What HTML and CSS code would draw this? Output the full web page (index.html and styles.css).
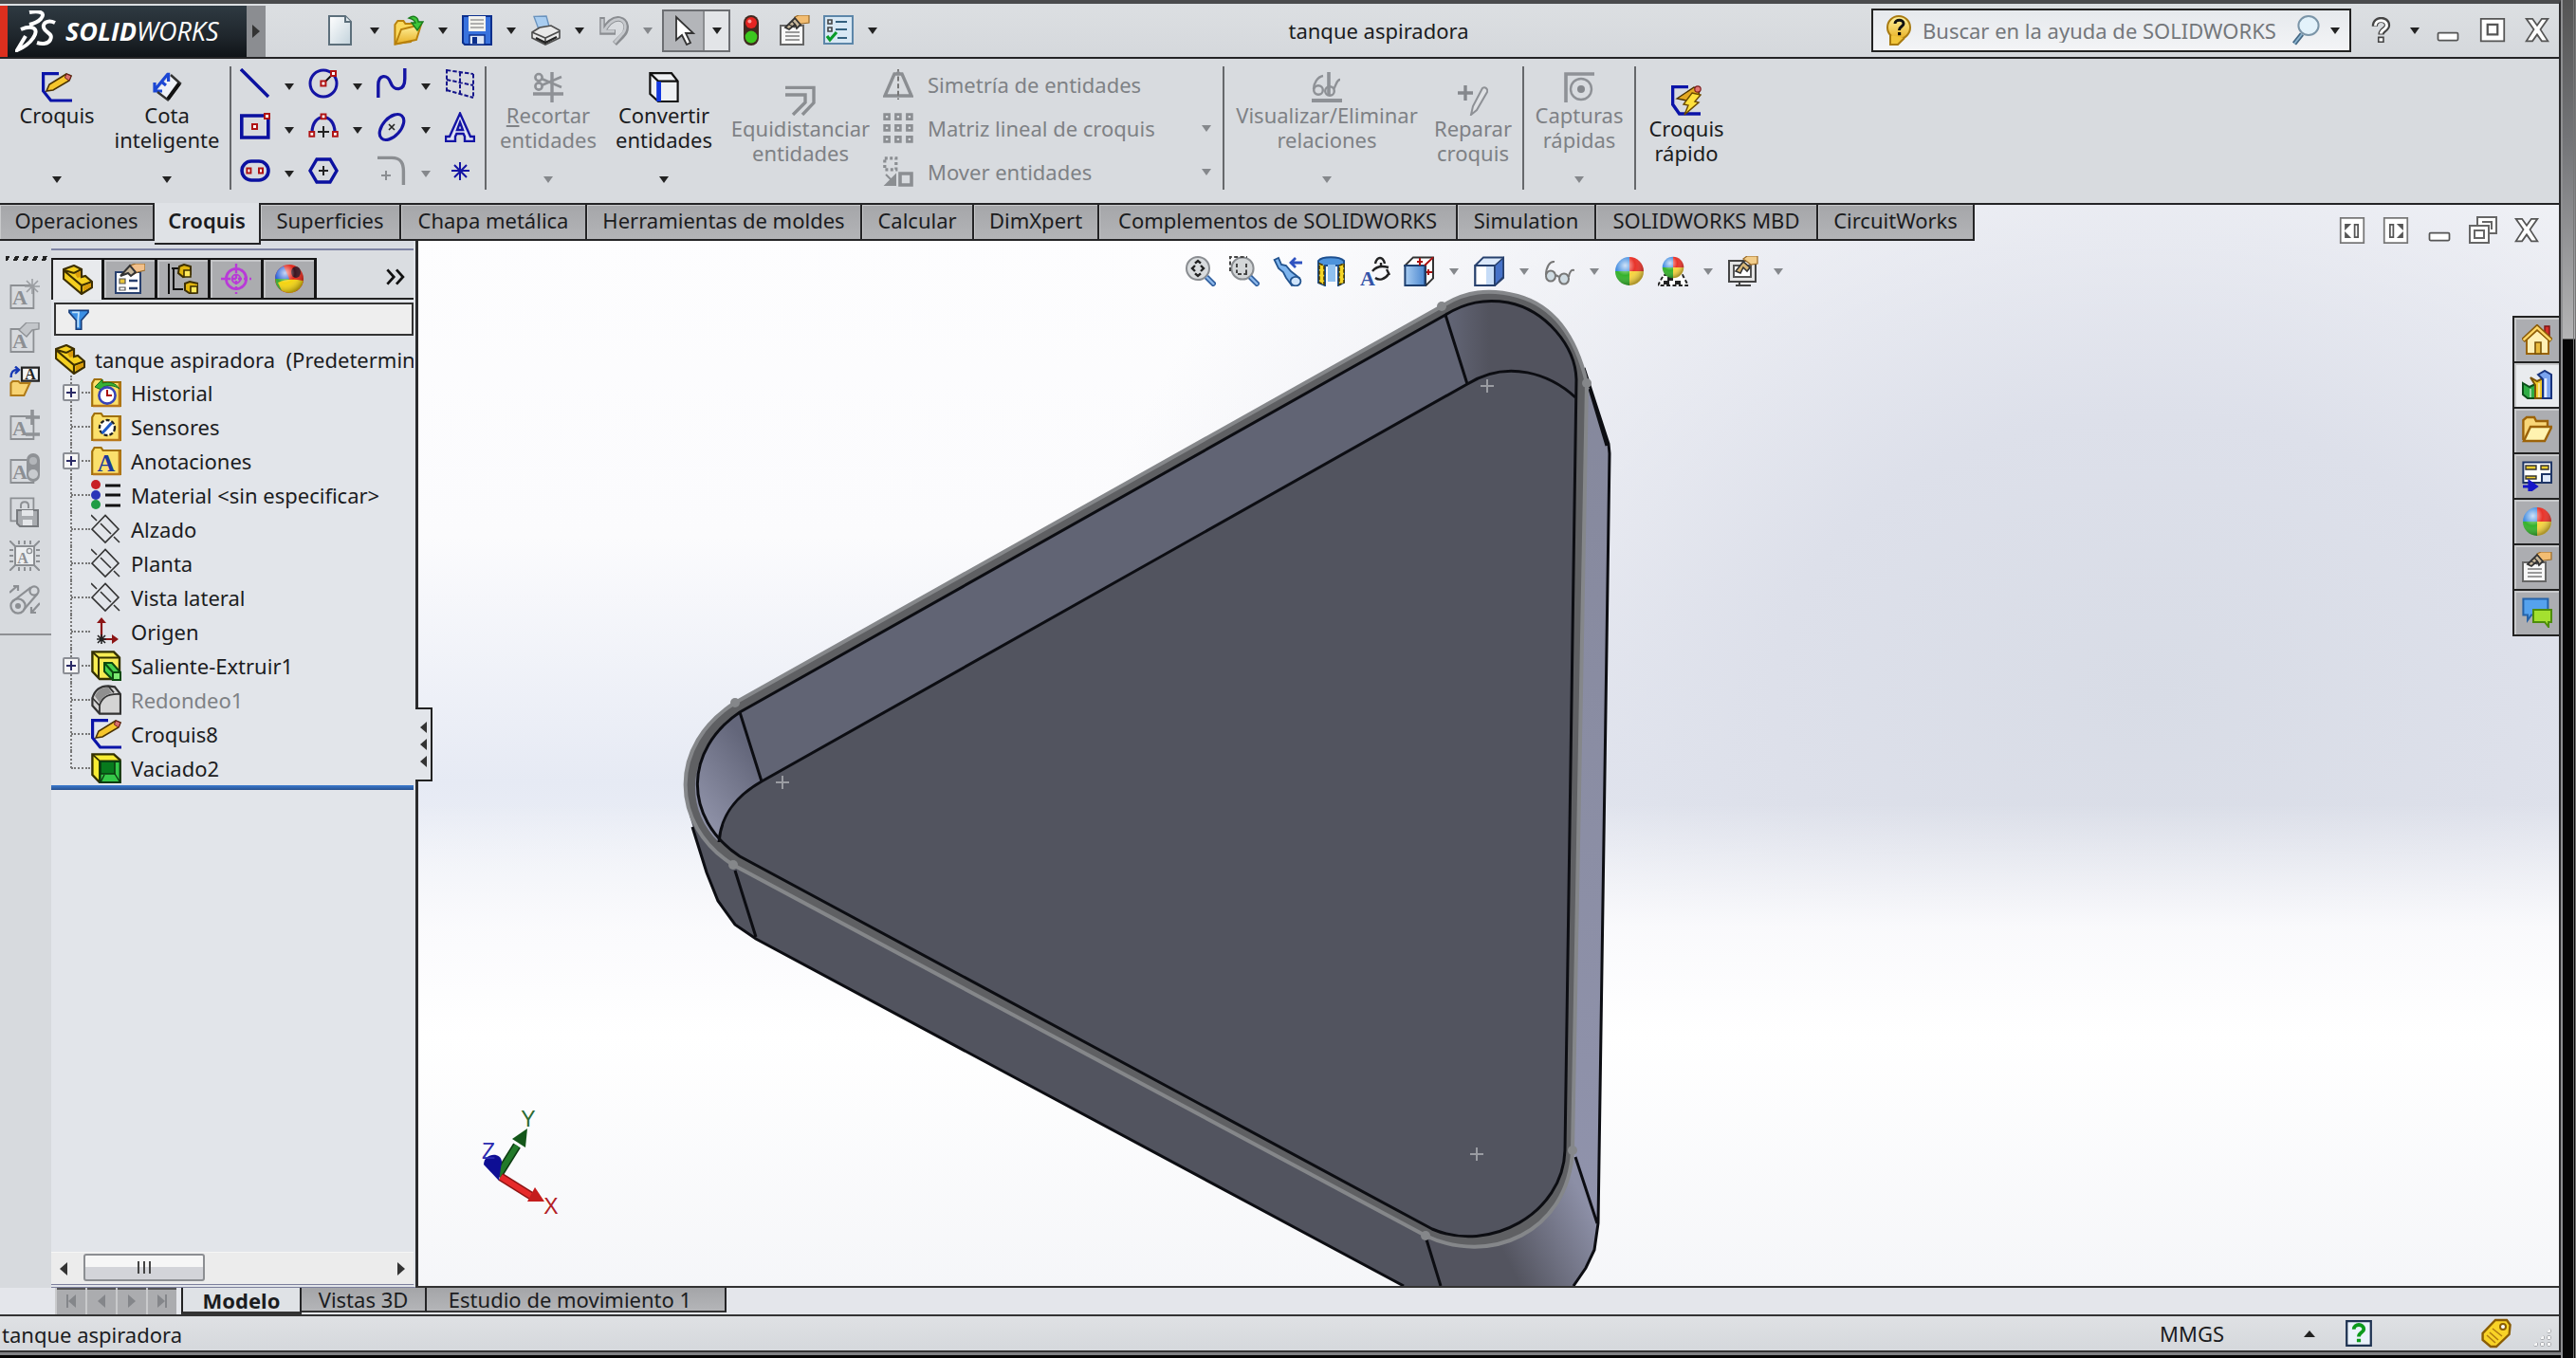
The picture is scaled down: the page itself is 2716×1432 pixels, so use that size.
FILE: index.html
```
<!DOCTYPE html>
<html lang="es">
<head>
<meta charset="utf-8">
<title>SOLIDWORKS - tanque aspiradora</title>
<link rel="stylesheet" href="styles.css">
</head>
<body>
<svg class="sprite" aria-hidden="true">
<defs>
<linearGradient id="gPaper" x1="0" y1="0" x2="1" y2="1"><stop offset="0" stop-color="#fff"/><stop offset="1" stop-color="#c3d3dc"/></linearGradient>
<linearGradient id="gGold" x1="0" y1="0" x2="0" y2="1"><stop offset="0" stop-color="#fff3a0"/><stop offset="1" stop-color="#e8b024"/></linearGradient>
<linearGradient id="gBlue" x1="0" y1="0" x2="1" y2="0"><stop offset="0" stop-color="#a9cdf2"/><stop offset="1" stop-color="#4a86cf"/></linearGradient>
<radialGradient id="gShine" cx=".35" cy=".3" r=".7"><stop offset="0" stop-color="#fff" stop-opacity=".75"/><stop offset=".5" stop-color="#fff" stop-opacity="0"/><stop offset="1" stop-color="#000" stop-opacity=".3"/></radialGradient>
</defs>
</svg>
<svg class="icons" aria-hidden="true">
<symbol id="new" viewBox="0 0 16 16"><path d="M2 .5h8.500l3 3v12H2z" fill="url(#gPaper)" stroke="#5c6f7b"/><path d="M10.500 .5v3h3" fill="#dfe8ed" stroke="#5c6f7b"/></symbol>
<symbol id="open" viewBox="0 0 16 16"><path d="M.7 15V5l1.500-2h3l1 1.500h6V7L9 14z" fill="#fbd95c" stroke="#b8810c"/><path d="M1 15.300L4 7.500 14.500 5 12 13z" fill="url(#gGold)" stroke="#b8810c"/><path d="M8 1.500c3-2 5 0 5 2h2.500L12.500 8 9.500 4h2C11 2.500 10 2 8 1.500z" fill="#3ec63a" stroke="#1a7c1c" stroke-width=".7"/></symbol>
<symbol id="save" viewBox="0 0 16 16"><path d="M.5.5h15v15H1.500l-1-1z" fill="#3872dd" stroke="#0b2f8c"/><path d="M3.500.5h9v8h-9z" fill="#f3f3ee"/><path d="M4.500 2.500h7M4.500 4.500h7M4.500 6.500h7" stroke="#999" stroke-width=".8"/><path d="M4 10.500h8v5H4z" fill="#dbe5f5" stroke="#0b2f8c" stroke-width=".7"/><path d="M5.500 11.500h2.500v3.500H5.500z" fill="#0b2f8c"/></symbol>
<symbol id="print" viewBox="0 0 16 16"><path d="M2 .7L8.500.5 10 6 4.500 7.500z" fill="#a9cdf0" stroke="#6a93be" stroke-width=".7"/><path d="M1 9l4-2.500 6-1L15.500 8v4L8 15.500 1 12z" fill="#e9e9e9" stroke="#4c4c4c" stroke-width=".8"/><path d="M1 9l7 3 7.500-3.500M8 12v3.500" fill="none" stroke="#4c4c4c" stroke-width=".8"/><path d="M3 12l5 2.500 6-3" fill="none" stroke="#222" stroke-width="1.200"/></symbol>
<symbol id="undo" viewBox="0 0 16 16"><path d="M2 1v8h7M2.500 8.500C5 4 8 1.500 11 2c4.500.8 4.500 6 1.500 9l-4 4" fill="none" stroke="#8a8d91" stroke-width="2.800"/><path d="M2 2v6.500h6.500M3 8C5.500 4 8 1.700 11 2.200c4 1 4 5.500 1 8.300l-3.500 4" fill="none" stroke="#c6c9cd" stroke-width="1.400"/></symbol>
<symbol id="cursor" viewBox="0 0 16 16"><path d="M4 1v12l3-2.500 2.500 5 2-1L9 9.500h4z" fill="#fff" stroke="#333" stroke-width=".9"/></symbol>
<symbol id="traffic" viewBox="0 0 16 16"><rect x="4" y="0" width="8" height="16" rx="4" fill="#402a20"/><circle cx="8" cy="4" r="3" fill="#e52521"/><circle cx="8" cy="11.500" r="3.200" fill="#3cc81e"/><circle cx="7.200" cy="3.200" r="1" fill="#f99"/></symbol>
<symbol id="props" viewBox="0 0 16 16"><path d="M.5 5.500h12v10H.5z" fill="#f7f7f7" stroke="#666"/><path d="M3 9h7.500M3 11h7.500M3 13h7.500" stroke="#999"/><path d="M8 1l2-1h5.500v4l-4 .5-2 1z" fill="#f2bd72" stroke="#9a6a27" stroke-width=".6"/><path d="M3 6.500L8 1.500l3 3.500-2 2-1-2-3 2.500z" fill="#c8b89c" stroke="#333" stroke-width=".9"/><path d="M5 5l3 1.500M6.500 3l2.500 3" stroke="#333" stroke-width=".6"/></symbol>
<symbol id="options" viewBox="0 0 16 16"><path d="M.5.500h15v14.500H.5z" fill="#d8e8f4" stroke="#5c86a9"/><path d="M2.500 2.500h2v2h-2zM2.500 6.500h2v2h-2z" fill="none" stroke="#444" stroke-width=".8"/><path d="M6.500 3.500h6M6.500 7.500h6M7.500 12h5" stroke="#33607e"/><path d="M2 11l1.500 2L7 9" fill="none" stroke="#0a9b29" stroke-width="1.600"/></symbol>
<symbol id="bulb" viewBox="0 0 16 16"><circle cx="8.500" cy="6.500" r="6" fill="url(#gGold)" stroke="#a87a11"/><path d="M4 10.500v5h4l3.500-3.500" fill="#f1c53a" stroke="#a87a11"/><path d="M6.500 4.500c0-2.500 4.500-2.500 4.500 0 0 1.600-2.300 1.500-2.300 3.500" fill="none" stroke="#111" stroke-width="1.500"/><path d="M8 9h1.600v1.600H8z"/></symbol>
<symbol id="lens" viewBox="0 0 16 16"><ellipse cx="9.500" cy="5.500" rx="5.300" ry="5" fill="#e3f2fb" stroke="#7b95a8"/><path d="M6 10l-4 5" stroke="#426683" stroke-width="2.600"/><path d="M6 10l-4 5" stroke="#8bb4d0" stroke-width="1"/></symbol>
<symbol id="q" viewBox="0 0 16 16"><path d="M4.500 5.500c0-5 7.500-5 7.500-.5 0 2.500-3.700 2.700-3.700 5.500" fill="none" stroke="#444" stroke-width="3.600"/><path d="M4.800 5.300c0-4.200 6.900-4.200 6.900-.3 0 2.500-3.500 2.500-3.500 5" fill="none" stroke="#fff" stroke-width="1.700"/><path d="M6.700 12.200h3v2.800h-3z" fill="#fff" stroke="#444" stroke-width=".9"/></symbol>
<symbol id="min" viewBox="0 0 16 16"><rect x="2" y="9.500" width="12" height="4.500" rx=".7" fill="#fff" stroke="#555"/></symbol>
<symbol id="max" viewBox="0 0 16 16"><path d="M1 1h14v13.500H1z" fill="#fff" stroke="#555"/><path d="M5 4.500h6v6H5z" fill="#fff" stroke="#555" stroke-width="1.300"/></symbol>
<symbol id="x" viewBox="0 0 16 16"><path d="M1.500 1h3.700L8 5l2.800-4h3.700L10 7.500l4.500 7h-3.700L8 10.500l-2.800 4H1.500l4.500-7z" fill="#fff" stroke="#555"/></symbol>
<symbol id="restore" viewBox="0 0 16 16"><path d="M5 1h10v8.500H5z" fill="#fff" stroke="#666"/><path d="M7.500 3.500h5v4" fill="none" stroke="#666"/><path d="M1 5.500h10v9H1z" fill="#fff" stroke="#666"/><path d="M3.500 8h5v4h-5z" fill="none" stroke="#666"/></symbol>
<symbol id="dock" viewBox="0 0 16 16"><path d="M1 .5h14v15H1z" fill="#fff" stroke="#777"/><path d="M9.500 4.500h2v7.500h-2z" fill="#fff" stroke="#555"/><path d="M3.500 4h4l-4 4zM3.500 12.500h4l-4-4z" fill="#555"/></symbol>
<symbol id="sketch" viewBox="0 0 16 16"><path d="M9 .8H.8v9.200l4 5H16" fill="none" stroke="#0b14a8" stroke-width="1.600"/><path d="M2.500 10L4 6.500 13 1l2.500 1-1 2.500-8.500 5z" fill="#f6c62c" stroke="#4a3200" stroke-width=".8"/><path d="M13 1l2.500 1-1 2.500-2.300-1.500z" fill="#d9706c" stroke="#6b1d1d" stroke-width=".5"/></symbol>
<symbol id="dim" viewBox="0 0 16 16"><path d="M3 9.500l5.500 4.500 6-8L9.500 2z" fill="#eef1f7"/><path d="M1.500 9.500L8.500 1M1.500 5.500v4.500h4M8 1.200h.8V5M5 5l2.500 2" fill="none" stroke="#1b46d4" stroke-width="1.600"/><path d="M3 10.500l5.500 4.200L15 6 10 1.500" fill="none" stroke="#333" stroke-width="1.200"/><path d="M8.500 14.200L14.500 6" stroke="#111" stroke-width="2"/></symbol>
<symbol id="line" viewBox="0 0 16 16"><path d="M.5.500L15 15" stroke="#0b11a0" stroke-width="1.700"/></symbol>
<symbol id="circ" viewBox="0 0 16 16"><circle cx="8" cy="8" r="7" fill="none" stroke="#1414a4" stroke-width="1.500"/><path d="M8 8l4.500-4.500" stroke="#111"/><path d="M6.700 6.700h2.500v2.500H6.700zM12 1.500h2.500V4H12z" fill="#fff" stroke="#b01414"/></symbol>
<symbol id="spline" viewBox="0 0 16 16"><path d="M.9 15.500V9c0-6 5-6 6.500-1.500s7.500 5 7.500-2V0" fill="none" stroke="#1414a4" stroke-width="1.700"/></symbol>
<symbol id="planes" viewBox="0 0 16 16"><path d="M1 .5v12.500M1 1l14 2M15 3v12.500M1 6l14 3M1 11.500l14 4M8 2v11.500" fill="none" stroke="#15158a" stroke-dasharray="2.200 1"/></symbol>
<symbol id="rect" viewBox="0 0 16 16"><path d="M.9 2h14v11.500H.9z" fill="none" stroke="#0b11a0" stroke-width="1.800"/><path d="M6.500 6.500h2.500V9H6.500zM13 1h2.500v2.500H13z" fill="#fff" stroke="#b01414"/></symbol>
<symbol id="arc" viewBox="0 0 16 16"><path d="M2 11c0-11 12-11 12 0" fill="none" stroke="#1414a4" stroke-width="1.600"/><path d="M8 7.500v6M5 10.500h6" stroke="#222"/><path d="M6.800 1.200h2.400v2.400H6.800zM.7 10.500h2.400v2.400H.7zM13 10.500h2.400v2.400H13z" fill="#fff" stroke="#b01414"/></symbol>
<symbol id="ellipse" viewBox="0 0 16 16"><ellipse cx="8" cy="8" rx="8" ry="4.700" transform="rotate(-48 8 8)" fill="none" stroke="#1414a4" stroke-width="1.600"/><path d="M6.500 6.500l3 3M9.500 6.500l-3 3" stroke="#222" stroke-width=".8"/></symbol>
<symbol id="glyph" viewBox="0 0 16 16"><path d="M8 .8L13.500 13h2v2.500h-5V13L9.800 11.500H6.200L5.500 13v2.500h-5V13h2zM8 5.500L6.500 9.500h3z" fill="#dfe2f3" stroke="#1414a4" stroke-width="1.200"/></symbol>
<symbol id="slot" viewBox="0 0 16 16"><rect x="1" y="3" width="14" height="10" rx="5" fill="none" stroke="#0b11a0" stroke-width="1.800"/><path d="M3.700 6.800h2v2.400h-2zM10 6.800h2v2.400h-2z" fill="#fff" stroke="#b01414"/></symbol>
<symbol id="poly" viewBox="0 0 16 16"><path d="M4.500 2h7l3.500 6-3.500 6h-7L1 8z" fill="none" stroke="#0b11a0" stroke-width="1.700"/><path d="M8 5.500v5M5.500 8h5" stroke="#222"/></symbol>
<symbol id="fillet" viewBox="0 0 16 16"><path d="M.5 1.200H8c5 0 6.200 3 6.200 7v7.300" fill="none" stroke="#8b8e92" stroke-width="1.700"/><path d="M5 8v5M2.500 10.500h5" stroke="#8b8e92"/></symbol>
<symbol id="star" viewBox="0 0 16 16"><path d="M8 3.500v9.500M3.500 8h9.500M5 5l6.500 6.500M11.500 5L5 11.500" stroke="#1414a4" stroke-width="1"/></symbol>
<symbol id="trim" viewBox="0 0 16 16"><g fill="none" stroke="#8e9196" stroke-width="1.300"><path d="M10 0v16M0 11.500h16" stroke-width="1.700"/><circle cx="3" cy="2.800" r="1.800"/><circle cx="3" cy="7.500" r="1.800"/><path d="M4.500 3.500L15 8M4.500 7L15 2.500"/></g></symbol>
<symbol id="convert" viewBox="0 0 16 16"><path d="M1 1h11l3 4v10.500H5L1 12z" fill="#eef0f3"/><path d="M1 .6h11l3.300 4.200v10.700H5L.7 11.500V.6L5 4.800h10M5 4.800v10.700" fill="none" stroke="#111" stroke-width="1.100"/><path d="M5.300 5v10.500" stroke="#1238e0" stroke-width="2.400"/></symbol>
<symbol id="offset" viewBox="0 0 16 16"><path d="M0 1.200h15v8L9 15.500M0 5h10.500v4L4 15.500" fill="none" stroke="#8b8e92" stroke-width="1.700"/></symbol>
<symbol id="mirror" viewBox="0 0 16 16"><path d="M6 2.500L1 14h14L10 2.500z" fill="none" stroke="#8b8e92" stroke-width="1.700"/><path d="M8 0v16" stroke="#777" stroke-dasharray="2.500 1.300"/><path d="M6 3l2-2.500L10 3z" fill="#8b8e92"/></symbol>
<symbol id="pattern" viewBox="0 0 16 16"><path d="M.8.800h2.500v2.500H.8zM6.700.8h2.500v2.500H6.700zM12.700.8h2.500v2.500h-2.500zM.8 6.700h2.500v2.500H.8zM6.700 6.700h2.500v2.500H6.700zM12.700 6.700h2.500v2.500h-2.500zM.8 12.700h2.500v2.500H.8zM6.700 12.700h2.500v2.500H6.700zM12.700 12.700h2.500v2.500h-2.500z" fill="none" stroke="#8b8e92" stroke-width="1.300"/></symbol>
<symbol id="move" viewBox="0 0 16 16"><path d="M.9.900h6v6h-6z" fill="none" stroke="#8b8e92" stroke-width="1.600" stroke-dasharray="1.500 1.200"/><path d="M9 9h6v6H9z" fill="none" stroke="#8b8e92" stroke-width="1.800"/><path d="M1.500 9.500l5 5M6.500 10v5h-5z" fill="#8b8e92" stroke="#8b8e92"/></symbol>
<symbol id="relations" viewBox="0 0 16 16"><g fill="none" stroke="#8e9196" stroke-width="1.200"><path d="M0 15h16" stroke-width="2"/><path d="M9 0v12" stroke-width="1.800"/><path d="M6 2C3 2.500 1 6 1 9"/><circle cx="3.500" cy="9.500" r="2.400"/><circle cx="9.500" cy="10" r="2.400"/><path d="M15 4c-2 0-2 3-3.500 5"/></g></symbol>
<symbol id="repair" viewBox="0 0 16 16"><path d="M4 0v8M0 4h8" stroke="#85888d" stroke-width="1.700"/><path d="M7 15.500l1-4.500L13 1.500c1.500-1 3 .5 2.500 2L10 13z" fill="#dfe1e4" stroke="#8e9196"/></symbol>
<symbol id="snap" viewBox="0 0 16 16"><g fill="none" stroke="#8e9196"><path d="M1 16V1h15" stroke-width="1.800"/><circle cx="9" cy="9" r="5.500" stroke-width="1.200"/></g><circle cx="9" cy="9" r="2" fill="#85888d"/></symbol>
<symbol id="rapid" viewBox="0 0 16 16"><path d="M9 .8H.8v9.200l3.500 5H15.500" fill="none" stroke="#0b14a8" stroke-width="1.700"/><path d="M3 7L12 1l3 1-.5 3L8 8z" fill="#e4a820" stroke="#4a3200" stroke-width=".7"/><circle cx="14" cy="2" r="1.600" fill="#e27575" stroke="#7d1f1f" stroke-width=".6"/><path d="M11 4l4.500 1-3 3.500 2 .5-7.500 6.500 2-5-2.500-.5z" fill="#ffe13c" stroke="#6b4a00" stroke-width=".7"/></symbol>
<symbol id="part" viewBox="0 0 16 16"><path d="M.5 2.500L6 .5l4 2v4l2-.5 3.500 3v3L10 15.500.5 7.500z" fill="#f4cf20" stroke="#3d2f00" stroke-width="1.100"/><path d="M.5 3l9.500 8v4M10 11l5.500-2M6 4.500l4-2M6 4.500L1 3" fill="none" stroke="#3d2f00" stroke-width="1.100"/><path d="M6.500 4.800L9.500 3.200v3.300L7.800 7zM11 11.500l4-1.700v2L11 14z" fill="#d99a0a"/></symbol>
<symbol id="pm" viewBox="0 0 16 16"><path d="M.5 4.500h13v11H.5z" fill="#fff" stroke="#28406e"/><path d="M2.500 8h3v2.500h-3z" fill="#e9c53a" stroke="#555" stroke-width=".6"/><path d="M2.500 12.500h3v1.500h-3z" fill="#fff" stroke="#555" stroke-width=".6"/><path d="M7.500 9h4.500M7.500 13h4.500" stroke="#28406e" stroke-width="1.200"/><path d="M8 1l3-1h5v3.500l-4 1-3 1.500z" fill="#f2c08a" stroke="#9a6a27" stroke-width=".6"/><path d="M3 6.500L8 1l3 3.500-2.500 2L7 5z" fill="#c8b89c" stroke="#333"/></symbol>
<symbol id="config" viewBox="0 0 16 16"><path d="M.5 0v16M2 2.500h5M3 2.500v11h5" fill="none" stroke="#111"/><path d="M6 1.500L8.500.5 12 1.500v4L8 7 5.500 5zM9 10.500l2.500-1 4.500 1v4.500l-4 1-3-2z" fill="#e2b70f" stroke="#3d2f00"/><path d="M8.500 3.500H12V7H8.500zM12 12h3.500v3.500H12z" fill="#ffe95c" stroke="#3d2f00" stroke-width=".8"/></symbol>
<symbol id="target" viewBox="0 0 16 16"><g fill="none" stroke="#b93ad8"><circle cx="8" cy="8" r="5.300" stroke-width="1.400"/><path d="M8 0v16M0 8h16" stroke-dasharray="2 1" stroke-width="1.200"/><circle cx="8" cy="8" r="2.200"/></g></symbol>
<symbol id="display" viewBox="0 0 16 16"><circle cx="8" cy="8" r="7.500" fill="#e32619"/><path d="M.5 8A7.500 7.500 0 0 1 5 1.200L8 8z" fill="#2b61d6"/><path d="M.6 8L8 8l-4 6.300A7.500 7.500 0 0 1 .6 8z" fill="#3aa935"/><path d="M15.400 9A7.500 7.500 0 0 1 4 14.300L2 10c4-2 8-2 13.400-1z" fill="#f4d411"/><ellipse cx="11.500" cy="4.500" rx="2.500" ry="3" fill="#3a1420"/><circle cx="8" cy="8" r="7.500" fill="url(#gShine)"/></symbol>
<symbol id="ball" viewBox="0 0 16 16"><path d="M8 8V.500A7.500 7.500 0 0 0 .5 8z" fill="#3f8be0"/><path d="M8 8V.500A7.500 7.500 0 0 1 15.500 8z" fill="#e8332a"/><path d="M8 8H.500A7.500 7.500 0 0 0 8 15.500z" fill="#35b22c"/><path d="M8 8h7.500A7.500 7.500 0 0 1 8 15.500z" fill="#f7d53f"/><circle cx="8" cy="8" r="7.500" fill="url(#gShine)"/></symbol>
<symbol id="funnel" viewBox="0 0 16 16"><path d="M.7 1h14.600v1.500L10 8.500v7H6v-7L.7 2.500z" fill="#3b8fe4" stroke="#173d7a" stroke-width="1.200"/><path d="M3 2.500h5L7.500 8v6" fill="none" stroke="#bfe2fc" stroke-width="1.300"/></symbol>
<symbol id="folder" viewBox="0 0 16 16"><path d="M.6 15V3L1.800 1h3.500l1 1.500h9.200V15z" fill="#fbe06c" stroke="#a0700a" stroke-width="1.100"/><path d="M15 3v12H1" fill="none" stroke="#b9781a" stroke-width="1.300"/></symbol>
<symbol id="history" viewBox="0 0 16 16"><use href="#folder"/><path d="M2 5l4-4v2c4-1 7 0 9 3-3-2-6-2-8.500-1v2z" fill="#37b135" stroke="#1b6c1b" stroke-width=".5"/><circle cx="8.500" cy="9.500" r="4.300" fill="#fff" stroke="#3844b8" stroke-width="1.300"/><path d="M8.500 6.500v3H11" fill="none" stroke="#a11"/></symbol>
<symbol id="sensor" viewBox="0 0 16 16"><use href="#folder"/><circle cx="8.500" cy="8.500" r="4" fill="#fff" stroke="#222" stroke-dasharray="2 1" stroke-width="1.200"/><path d="M5.800 11.500l5-5.500" stroke="#1e5ac8" stroke-width="1.500"/></symbol>
<symbol id="annot" viewBox="0 0 16 16"><use href="#folder"/><text x="8" y="13.500" text-anchor="middle" class="letter" fill="#1b3a9c">A</text></symbol>
<symbol id="material" viewBox="0 0 16 16"><circle cx="2.500" cy="2.500" r="2.500" fill="#c82026"/><circle cx="2.500" cy="8" r="2.500" fill="#2a34b8"/><circle cx="2.500" cy="13" r="2.500" fill="#1f9c45"/><path d="M7.500 3h8M7.500 8h8M7.500 13.500h8" stroke="#111" stroke-width="1.400"/></symbol>
<symbol id="plane" viewBox="0 0 16 16"><path d="M7.500.7L14.500 8l-7 7L.5 8zM0 .5l3 3M5 5l5.500 5.500M12 12l3 3" fill="none" stroke="#333" stroke-width=".8"/></symbol>
<symbol id="origin" viewBox="0 0 16 16"><path d="M5.500 12V3M6 12h6" stroke="#8c1515" stroke-width="1.100"/><path d="M3 3.500L5.500.5 8 3.500zM11 9.500l3.500 2.500-3.500 2.500z" fill="#8c1515"/><path d="M3.500 10l4 4M7.500 10l-4 4M5.500 9.500v5M3 12h5" stroke="#222" stroke-width=".8"/></symbol>
<symbol id="extrude" viewBox="0 0 16 16"><path d="M.7.700L12 .7l3 3V15H4.500L.7 11z" fill="#f7ec53" stroke="#333000" stroke-width="1.200"/><path d="M.7.700l3.300 3h11M4 3.700V15" fill="none" stroke="#333000"/><path d="M7 6.500h4l4.500 5v4h-4L7 11z" fill="#47cf4c" stroke="#0c4a10"/><path d="M11.500 11.500h4v4h-4zL7 6.500" fill="#7dea72" stroke="#0c4a10"/></symbol>
<symbol id="round" viewBox="0 0 16 16"><path d="M.7 7C2 3 5 .7 9 .7l3.500.5L15.500 5v10.300H4.500L.7 11z" fill="#d4d4d4" stroke="#333" stroke-width="1.100"/><path d="M.7 7l3.800 4v4.500M4.500 11c1-4 4-6.500 11-6M9 .7l3 3.500" fill="none" stroke="#333" stroke-width=".9"/><path d="M2 6c2-4 4-4.500 7-4.500l2 3c-3 .5-5 2-6.500 5z" fill="#8f8f8f"/></symbol>
<symbol id="shell" viewBox="0 0 16 16"><path d="M.7.700H12l3.300 3V15.500H4.500L.7 11.500z" fill="#f7ec33" stroke="#333000" stroke-width="1.200"/><path d="M.7.700l3.800 3.500h11M4.500 4.200v11.300" fill="none" stroke="#333000" stroke-width=".9"/><path d="M4.800 4.500h10.500v11H4.800z" fill="#35c849" stroke="#0c3a10"/><path d="M5 4.500h7.500V11H5z" fill="#077a1d" stroke="#0c3a10" stroke-width=".8"/><path d="M5 15.500L7 11.500M12.500 11l2.500 4" stroke="#0c3a10" stroke-width=".7"/></symbol>
<symbol id="boxa" viewBox="0 0 16 16"><path d="M.7 3.500h12v12H.7z" fill="none" stroke="#8c8f93" stroke-width=".9"/><text x="5.500" y="13.500" text-anchor="middle" class="letter small" fill="#8c8f93">A</text></symbol>
<symbol id="n1" viewBox="0 0 16 16"><use href="#boxa"/><path d="M12 0v8M8 4h8M9 1l6 6M15 1L9 7" stroke="#9b9ea2" stroke-width=".8"/></symbol>
<symbol id="n2" viewBox="0 0 16 16"><use href="#boxa"/><path d="M5 4l4-4h6.500v3.500L12 4l-3 3.500z" fill="#c3c6ca" stroke="#8f9296" stroke-width=".7"/></symbol>
<symbol id="n3" viewBox="0 0 16 16"><path d="M6.500.8h9v7h-9z" fill="#f4f4f4" stroke="#222" stroke-width="1.100"/><text x="11" y="7" text-anchor="middle" class="letter tiny" fill="#222">A</text><path d="M.8 6c0-3 1-4 3.500-4M3 .3L5 2 3 4" fill="none" stroke="#1638b4" stroke-width="1.200"/><path d="M.7 15.500V9l1-1h3l1 1h5l-3 6.500z" fill="#f7d372" stroke="#b07b18"/></symbol>
<symbol id="n4" viewBox="0 0 16 16"><use href="#boxa"/><path d="M12 0v8M8.500 4h7.500M8.500 13h7.500" stroke="#8f9296" stroke-width="1.800"/></symbol>
<symbol id="n5" viewBox="0 0 16 16"><use href="#boxa"/><rect x="9" y="0" width="7" height="15" rx="3.500" fill="#8f9296"/><circle cx="12.500" cy="4" r="2" fill="#b3b6ba"/><circle cx="12.500" cy="11" r="2.500" fill="#c8cbcf"/></symbol>
<symbol id="n6" viewBox="0 0 16 16"><path d="M.7.700h12v12H.7z" fill="none" stroke="#8c8f93" stroke-width=".9"/><path d="M4 7h11v8.500H5.500L4 14z" fill="#a9acb0" stroke="#777a7e"/><path d="M6.500 7h6v3h-6zM7 12h5v3H7z" fill="#e4e6e9"/><path d="M6 6V4.500C6 2 10 2 10 4.500V6" fill="none" stroke="#8c8f93"/></symbol>
<symbol id="n7" viewBox="0 0 16 16"><path d="M3 3h10v10H3z" fill="#eceef0" stroke="#8c8f93"/><path d="M0 0l3 3M16 0l-3 3M0 16l3-3M16 16l-3-3M5 0v2M8 0v2M11 0v2M5 14v2M8 14v2M11 14v2M0 5h2M0 8h2M0 11h2M14 5h2M14 8h2M14 11h2" stroke="#8c8f93"/><text x="7" y="12" text-anchor="middle" class="letter tiny" fill="#8c8f93">A</text><circle cx="10.500" cy="5.500" r="1.300" fill="none" stroke="#8c8f93" stroke-width=".7"/></symbol>
<symbol id="n8" viewBox="0 0 16 16"><g fill="none" stroke="#8c8f93" stroke-width="1.100"><circle cx="4.500" cy="11.500" r="3.800"/><circle cx="13" cy="3.500" r="2.300"/><path d="M1.800 9L11.300 1.700M7.500 13.500L14.800 5M0 4.500l4-3.500M2 1h2.500v2.500M16 10l-4 4.500M11.500 12v3H14"/></g><circle cx="4.500" cy="11.500" r="1.500" fill="#8c8f93"/></symbol>
<symbol id="zfit" viewBox="0 0 16 16"><circle cx="6.500" cy="6.500" r="6" fill="#d9dcde" stroke="#8a8d91"/><path d="M5 5L3.500 6.500 5 8M8 5l1.500 1.500L8 8M5 3.800L6.500 2.500 8 3.800M5 9.200l1.500 1.300L8 9.200" fill="none" stroke="#222" stroke-width="1.200"/><path d="M11 11l4.500 4.500" stroke="#2f5e9e" stroke-width="2.800"/><path d="M11 11l4 4" stroke="#8db9ea" stroke-width="1.200"/></symbol>
<symbol id="zarea" viewBox="0 0 16 16"><circle cx="7" cy="6.500" r="5.800" fill="#d3d6d8" stroke="#8a8d91"/><path d="M.5 8V.500h9M4 4v5M9 4v5M4.500 9.500h5" fill="none" stroke="#444" stroke-dasharray="2 1.200"/><path d="M11 11l4.500 4.500" stroke="#2f5e9e" stroke-width="2.800"/><path d="M11 11l4 4" stroke="#8db9ea" stroke-width="1.200"/></symbol>
<symbol id="prev" viewBox="0 0 16 16"><path d="M.8 2L3 1l1.500 3.500L7 5l2.500 3 4.500 3.500-4 4L7 11.500l-1.500-3L3 6.500z" fill="#7db4ee" stroke="#22538f" stroke-width=".9"/><ellipse cx="12" cy="13.300" rx="2.700" ry="2.400" fill="#cfe4fa" stroke="#22538f" stroke-width=".9"/><path d="M15.500 3.500H9.500M12 1L9.500 3.500 12 6" fill="none" stroke="#2f52c0" stroke-width="1.400"/></symbol>
<symbol id="section" viewBox="0 0 16 16"><path d="M1 2.500C3 0 12 0 14.500 2.500V14l-3 1.500V5h-7v10.500L1 14z" fill="#4d93dc" stroke="#1d4f8f"/><path d="M1.500 4l2.500 1v10L1.500 14zM12 5l2.500-1v10L12 15z" fill="#f5d527" stroke="#4a3a00" stroke-width=".8" stroke-dasharray="2 .8"/><path d="M6 4.500h4v9H6z" fill="#8fc0f0"/></symbol>
<symbol id="aview" viewBox="0 0 16 16"><text x="4" y="15.500" text-anchor="middle" class="letter small" fill="#3454a8">A</text><path d="M8 4c1-4 4-4 5 0M6.500 8c2-2.500 5-3 8.500-2M8 11.500c2 1.500 5 1 7-2M11 3.500v2M14 7l1.500 3" fill="none" stroke="#222" stroke-width="1.200"/></symbol>
<symbol id="orient" viewBox="0 0 16 16"><path d="M5 .700h10.500v11l-4 4V5H.700L5 .7z" fill="#fff" stroke="#333"/><path d="M.7 5h10.500v10.500H.7z" fill="url(#gBlue)" stroke="#1d3f70"/><path d="M11 5L15.500.700M8.500 1v4M7 3h3M13 7v3M12 8.500h3" stroke="#a11"/></symbol>
<symbol id="style" viewBox="0 0 16 16"><path d="M.7 5L5 .7h10.500v10.800l-4.500 4H.7z" fill="#dbe8fa" stroke="#27406d"/><path d="M.7 5h10.300v10.500H.7z" fill="#fff" stroke="#27406d"/><path d="M6.500 5.500h4V15h-4z" fill="#c6dcf7"/><path d="M11 5v10.500L15.500 11V1z" fill="#4672c8" stroke="#27406d" stroke-width=".8"/></symbol>
<symbol id="glasses" viewBox="0 0 16 16"><g fill="none" stroke="#777"><path d="M5.500 3C3 2.500 1 6 1 10"/><ellipse cx="3.500" cy="10.500" rx="2.500" ry="2.800" fill="#cfdbe2"/><ellipse cx="10.500" cy="12" rx="2.500" ry="2.800" fill="#cfdbe2"/><path d="M6 10l2 1M13 11c.5-3 1.500-4 3-3.500"/></g></symbol>
<symbol id="scene" viewBox="0 0 16 16"><path d="M0 15.500L3 10h10l3 5.500z" fill="#fff" stroke="#222" stroke-dasharray="2 1.200"/><path d="M3 13h3v2H3zM9 13h3v2H9zM5 11h3v2H5z" fill="#222"/><svg x="2" y="0" width="12" height="12"><use href="#ball"/></svg></symbol>
<symbol id="monitor" viewBox="0 0 16 16"><path d="M.5 2.500h14v11H.5z" fill="#e4e4e4" stroke="#444"/><path d="M3 5h9v6H3z" fill="#fff" stroke="#555"/><path d="M4 15.500h8M6 13.500v2" stroke="#444"/><path d="M8 1.500l2-1.500h5.500v4L12 4.500z" fill="#f2cd8a" stroke="#9a6a27" stroke-width=".6"/><path d="M4 8l4-5 3.500 3-1.500 2-2-2-1.500 3z" fill="#d8b778" stroke="#333" stroke-width=".8"/></symbol>
<symbol id="home" viewBox="0 0 16 16"><path d="M12 1h2.500v6H12z" fill="#d3302a" stroke="#7d1512" stroke-width=".7"/><path d="M2.500 8v7.500h11.500V8L8 3z" fill="#fff0b5" stroke="#9a6408"/><path d="M.5 8.500L8 1.500l7.500 7" fill="none" stroke="#8c5b07" stroke-width="2.600"/><path d="M.8 8.300L8 1.700l7.200 6.600" fill="none" stroke="#ffd767" stroke-width="1.200"/><path d="M7 9.500h3v6H7z" fill="#e8ba3d" stroke="#7a5306" stroke-width=".8"/></symbol>
<symbol id="library" viewBox="0 0 16 16"><path d="M.5 7L4 9l3-1.500V15H3L.5 13z" fill="#2fae45" stroke="#0b4f1a"/><path d="M4.500 4L8 6l3-1.500V15H7V8z" fill="#f3ca2c" stroke="#7a5306"/><path d="M8.500 2.500L12 .5l3.500 2V15H11V5z" fill="#7ba3ee" stroke="#18337d"/><path d="M12.500 4.500v10" stroke="#e4edff" stroke-width="1.300"/><path d="M4.500 10v4.500M9 7v7.500" stroke="#fff" stroke-opacity=".5"/></symbol>
<symbol id="explorer" viewBox="0 0 16 16"><path d="M.7 13V2.500L2.500 1h4l1 2h6v3" fill="#f9d778" stroke="#9c6309" stroke-width="1.200"/><path d="M1 13.500L4.500 6h11.200L12 13.500z" fill="#fff3b0" stroke="#9c6309" stroke-width="1.200"/></symbol>
<symbol id="palette" viewBox="0 0 16 16"><path d="M.7.700h14.800v10.800H.7z" fill="#fff" stroke="#1e3566"/><path d="M2 2.500h5.500v2H2zM10 2.500h4v2h-4zM2 8h5.500v1.500H2z" fill="#f0cf2e" stroke="#333" stroke-width=".7"/><path d="M10.500 7h5v4.500h-5z" fill="#dfe9fb" stroke="#1e3566"/><path d="M.5 13.500h4M4 11l3.500 2.500L4 16z" fill="#1616c8" stroke="#1616c8" stroke-width="1.600"/></symbol>
<symbol id="chat" viewBox="0 0 16 16"><path d="M.7.700h13v8.500H5L3 12V9.200H.7z" fill="#55a2ee" stroke="#2462a8"/><path d="M6 6.500h9.500v6.500H14v2.500L12 13H6z" fill="#a4e02f" stroke="#4d8d09"/></symbol>
<symbol id="help" viewBox="0 0 16 16"><path d="M.7.700h14.600v14.600H.7z" fill="#eaf2fb" stroke="#1f3352" stroke-width="1.300"/><path d="M5 5.500c0-3.500 6-3.500 6 0 0 2-3 2-3 4.500" fill="none" stroke="#0c9a1c" stroke-width="2.200"/><path d="M6.800 11.300h2.400v2H6.800z" fill="#0c9a1c"/></symbol>
<symbol id="tag" viewBox="0 0 16 16"><path d="M7.500 1h6l1.800 2.500-.5 5L8 15H5L.8 11.500V8z" fill="#f8d327" stroke="#8a5d05" stroke-width="1.200"/><circle cx="11.500" cy="4.500" r="1.500" fill="#fff" stroke="#8a5d05"/><path d="M6 5.500l5 4M4.500 7.500l4.500 4M3 9l4.500 4" stroke="#b07b10" stroke-width=".8"/></symbol>
<symbol id="chev" viewBox="0 0 16 16"><path d="M1 2.500l5 5.500-5 5.500M8 2.500l5 5.500-5 5.500" fill="none" stroke="#111" stroke-width="2"/></symbol>
</svg>

<div class="desktop">
<div class="app">
<header class="titlebar">
  <div class="brand">
    <svg class="ds" viewBox="0 0 44 44" aria-hidden="true"><path d="M15 2c10-2 18 0 12 7-3 3-8 5-12 6M6 20c12-5 20-1 13 9-4 6-10 10-17 13l9-15M42 13c-8-4-15 1-11 7 3 4 9 5 6 11-2 4-8 5-14 3" fill="none" stroke="#fff" stroke-width="4"/></svg>
    <span class="name"><b>SOLID</b>WORKS</span>
  </div>
  <button class="flyout" aria-label="Menú"><i class="tri right"></i></button>
  <nav class="quick">
    <button aria-label="Nuevo"><svg class="i"><use href="#new"/></svg></button><button class="dd" aria-label="Más"><i class="tri"></i></button>
    <button aria-label="Abrir"><svg class="i"><use href="#open"/></svg></button><button class="dd" aria-label="Más"><i class="tri"></i></button>
    <button aria-label="Guardar"><svg class="i"><use href="#save"/></svg></button><button class="dd" aria-label="Más"><i class="tri"></i></button>
    <button aria-label="Imprimir"><svg class="i"><use href="#print"/></svg></button><button class="dd" aria-label="Más"><i class="tri"></i></button>
    <button aria-label="Deshacer" disabled><svg class="i"><use href="#undo"/></svg></button><button class="dd off" aria-label="Más" disabled><i class="tri"></i></button>
  </nav>
  <div class="select-tool"><button class="pressed" aria-label="Seleccionar"><svg class="i"><use href="#cursor"/></svg></button><button aria-label="Más"><i class="tri"></i></button></div>
  <nav class="quick tail">
    <button aria-label="Reconstruir"><svg class="i"><use href="#traffic"/></svg></button>
    <button aria-label="Propiedades"><svg class="i"><use href="#props"/></svg></button>
    <button aria-label="Opciones"><svg class="i"><use href="#options"/></svg></button><button class="dd" aria-label="Más"><i class="tri"></i></button>
  </nav>
  <h1>tanque aspiradora</h1>
  <div class="search">
    <svg class="i"><use href="#bulb"/></svg>
    <input type="text" aria-label="Buscar" placeholder="Buscar en la ayuda de SOLIDWORKS">
    <button aria-label="Buscar"><svg class="i"><use href="#lens"/></svg></button><button class="dd" aria-label="Más"><i class="tri"></i></button>
  </div>
  <div class="winctl">
    <button aria-label="Ayuda"><svg class="c"><use href="#q"/></svg></button><button class="dd" aria-label="Más"><i class="tri"></i></button>
    <button aria-label="Minimizar"><svg class="c"><use href="#min"/></svg></button>
    <button aria-label="Maximizar"><svg class="c"><use href="#max"/></svg></button>
    <button aria-label="Cerrar"><svg class="c"><use href="#x"/></svg></button>
  </div>
</header>

<div class="ribbon">
  <div class="group first">
    <button class="cmd w110"><svg class="i"><use href="#sketch"/></svg><span>Croquis</span><i class="tri"></i></button>
    <button class="cmd w122"><svg class="i"><use href="#dim"/></svg><span>Cota<br>inteligente</span><i class="tri"></i></button>
  </div>
  <div class="group shapes">
    <button aria-label="Línea"><svg class="i"><use href="#line"/></svg></button><button class="dd" aria-label="Más"><i class="tri"></i></button>
    <button aria-label="Círculo"><svg class="i"><use href="#circ"/></svg></button><button class="dd" aria-label="Más"><i class="tri"></i></button>
    <button aria-label="Spline"><svg class="i"><use href="#spline"/></svg></button><button class="dd" aria-label="Más"><i class="tri"></i></button>
    <button aria-label="Plano"><svg class="i"><use href="#planes"/></svg></button>
    <button aria-label="Rectángulo"><svg class="i"><use href="#rect"/></svg></button><button class="dd" aria-label="Más"><i class="tri"></i></button>
    <button aria-label="Arco"><svg class="i"><use href="#arc"/></svg></button><button class="dd" aria-label="Más"><i class="tri"></i></button>
    <button aria-label="Elipse"><svg class="i"><use href="#ellipse"/></svg></button><button class="dd" aria-label="Más"><i class="tri"></i></button>
    <button aria-label="Texto"><svg class="i"><use href="#glyph"/></svg></button>
    <button aria-label="Ranura"><svg class="i"><use href="#slot"/></svg></button><button class="dd" aria-label="Más"><i class="tri"></i></button>
    <button aria-label="Polígono"><svg class="i"><use href="#poly"/></svg></button><span></span>
    <button aria-label="Redondeo" disabled><svg class="i"><use href="#fillet"/></svg></button><button class="dd off" aria-label="Más" disabled><i class="tri"></i></button>
    <button aria-label="Punto"><svg class="i"><use href="#star"/></svg></button>
  </div>
  <div class="group">
    <button class="cmd w130 off" disabled><svg class="i"><use href="#trim"/></svg><span><u>R</u>ecortar<br>entidades</span><i class="tri"></i></button>
    <button class="cmd w114"><svg class="i"><use href="#convert"/></svg><span>Convertir<br>entidades</span><i class="tri"></i></button>
    <button class="cmd w174 off low" disabled><svg class="i"><use href="#offset"/></svg><span>Equidistanciar<br>entidades</span></button>
    <div class="rows">
      <button disabled><svg class="i"><use href="#mirror"/></svg><span>Simetría de entidades</span></button>
      <button disabled><svg class="i"><use href="#pattern"/></svg><span>Matriz lineal de croquis</span><i class="tri"></i></button>
      <button disabled><svg class="i"><use href="#move"/></svg><span>Mover entidades</span><i class="tri"></i></button>
    </div>
  </div>
  <div class="group pad">
    <button class="cmd w216 off" disabled><svg class="i"><use href="#relations"/></svg><span>Visualizar/Eliminar<br>relaciones</span><i class="tri"></i></button>
    <button class="cmd w92 off low" disabled><svg class="i"><use href="#repair"/></svg><span>Reparar<br>croquis</span></button>
  </div>
  <div class="group">
    <button class="cmd w116 off" disabled><svg class="i"><use href="#snap"/></svg><span>Capturas<br>rápidas</span><i class="tri"></i></button>
  </div>
  <div class="group last">
    <button class="cmd w106 low"><svg class="i"><use href="#rapid"/></svg><span>Croquis<br>rápido</span></button>
  </div>
</div>

<div class="workspace">
<nav class="tabs">
  <button>Operaciones</button><button class="active">Croquis</button><button>Superficies</button><button>Chapa metálica</button><button>Herramientas de moldes</button><button>Calcular</button><button>DimXpert</button><button>Complementos de SOLIDWORKS</button><button>Simulation</button><button>SOLIDWORKS MBD</button><button>CircuitWorks</button>
</nav>
<div class="main">
  <aside class="notes">
    <div class="grip"></div>
    <div class="note-tools">
      <button aria-label="Nueva nota" disabled><svg class="i"><use href="#n1"/></svg></button>
      <button aria-label="Editar nota" disabled><svg class="i"><use href="#n2"/></svg></button>
      <button aria-label="Abrir nota"><svg class="i"><use href="#n3"/></svg></button>
      <button aria-label="Agregar o quitar" disabled><svg class="i"><use href="#n4"/></svg></button>
      <button aria-label="Reconstruir nota" disabled><svg class="i"><use href="#n5"/></svg></button>
      <button aria-label="Guardar nota" disabled><svg class="i"><use href="#n6"/></svg></button>
      <button aria-label="Bloque" disabled><svg class="i"><use href="#n7"/></svg></button>
      <button aria-label="Correa" disabled><svg class="i"><use href="#n8"/></svg></button>
    </div>
  </aside>
  <section class="panel">
    <div class="ptabs">
      <button class="active" aria-label="Gestor de diseño"><svg class="i"><use href="#part"/></svg></button>
      <button aria-label="PropertyManager"><svg class="i"><use href="#pm"/></svg></button>
      <button aria-label="ConfigurationManager"><svg class="i"><use href="#config"/></svg></button>
      <button aria-label="DimXpertManager"><svg class="i"><use href="#target"/></svg></button>
      <button aria-label="DisplayManager"><svg class="i"><use href="#display"/></svg></button>
      <button class="more" aria-label="Más"><svg class="s"><use href="#chev"/></svg></button>
    </div>
    <label class="filter"><svg class="s"><use href="#funnel"/></svg><input type="text" aria-label="Filtro"></label>
    <div class="tree">
      <div class="root"><svg class="i"><use href="#part"/></svg><span>tanque aspiradora  (Predetermin</span></div>
      <ul>
        <li><button class="exp" aria-label="Expandir"></button><svg class="i"><use href="#history"/></svg><span>Historial</span></li>
        <li><svg class="i"><use href="#sensor"/></svg><span>Sensores</span></li>
        <li><button class="exp" aria-label="Expandir"></button><svg class="i"><use href="#annot"/></svg><span>Anotaciones</span></li>
        <li><svg class="i"><use href="#material"/></svg><span>Material &lt;sin especificar&gt;</span></li>
        <li><svg class="i"><use href="#plane"/></svg><span>Alzado</span></li>
        <li><svg class="i"><use href="#plane"/></svg><span>Planta</span></li>
        <li><svg class="i"><use href="#plane"/></svg><span>Vista lateral</span></li>
        <li><svg class="i"><use href="#origin"/></svg><span>Origen</span></li>
        <li><button class="exp" aria-label="Expandir"></button><svg class="i"><use href="#extrude"/></svg><span>Saliente-Extruir1</span></li>
        <li class="off"><svg class="i"><use href="#round"/></svg><span>Redondeo1</span></li>
        <li><svg class="i"><use href="#sketch"/></svg><span>Croquis8</span></li>
        <li><svg class="i"><use href="#shell"/></svg><span>Vaciado2</span></li>
      </ul>
      <div class="rollback"></div>
    </div>
    <div class="hscroll"><button aria-label="Izquierda"><i class="tri left"></i></button><div class="track"><div class="thumb"><i></i><i></i><i></i></div></div><button aria-label="Derecha"><i class="tri right"></i></button></div>
  </section>
  <section class="view">
    <svg class="model" viewBox="441 254 2257 1102" preserveAspectRatio="xMinYMin meet" role="img" aria-label="Modelo del tanque">
      <defs>
        <linearGradient id="mLeft" gradientUnits="userSpaceOnUse" x1="735" y1="850" x2="800" y2="800"><stop offset="0" stop-color="#8d90a6"/><stop offset="1" stop-color="#63667a"/></linearGradient>
        <linearGradient id="mTop" gradientUnits="userSpaceOnUse" x1="1530" y1="0" x2="1570" y2="0"><stop offset="0" stop-color="#616474"/><stop offset="1" stop-color="#52535e"/></linearGradient>
        <linearGradient id="mCorner" gradientUnits="userSpaceOnUse" x1="1585" y1="1320" x2="1675" y2="1275"><stop offset="0" stop-color="#53545f"/><stop offset="1" stop-color="#8c8fa6"/></linearGradient>
        <linearGradient id="mRight" x1="0" y1="0" x2="0" y2="1"><stop offset="0" stop-color="#85889c"/><stop offset="1" stop-color="#9093ac"/></linearGradient>
      </defs>
      <path d="M727 860L745 920 757 950 775 975 797 990 1480 1356H1519L1503 1303 773 912z" fill="#52545f"/>
      <path d="M1503 1303C1560 1330 1640 1300 1658 1213L1685 1290 1681 1318 1672 1337 1659 1356H1519z" fill="url(#mCorner)"/>
      <path d="M1666 384L1673 404 1697 475 1685 1290 1658 1213z" fill="url(#mRight)"/>
      <path d="M730 872L745 920 757 950 775 975 797 990 1480 1356M1659 1356L1672 1337 1681 1318 1685 1290 1697 478 1696 468 1670 388M1676 410L1694 470M1661 1220L1684 1290M1504 1307L1519 1356M775 918L797 988" fill="none" stroke="#0c0d12" stroke-width="3"/>
      <path d="M775 741L1520 323C1545 307 1570 304 1600 312 1640 323 1662 356 1673 404L1658 1213C1654 1300 1570 1335 1503 1303L773 912C706 870 705 785 775 741z" fill="#5f6063" stroke="#85878a" stroke-width="4"/>
      <path d="M1524 332C1545 319 1565 315 1590 319 1630 327 1661 365 1662 400L1650 1213C1648 1280 1570 1322 1510 1296L780 903C719 862 722 790 780 751z" fill="#52545f"/>
      <path d="M780 751L1524 332 1547 405 803 824z" fill="#616474"/>
      <path d="M1524 332C1545 319 1565 315 1590 319 1630 327 1661 365 1661 419 1635 395 1590 378 1547 405z" fill="url(#mTop)"/>
      <path d="M780 751L803 824C775 840 760 860 758 888 719 850 725 790 780 751z" fill="url(#mLeft)"/>
      <path d="M1524 332L1547 405M780 751L803 824M758 888C760 860 775 840 803 824L1547 405C1590 378 1635 395 1661 419" fill="none" stroke="#0c0d12" stroke-width="3"/>
      <path d="M1524 332C1545 319 1565 315 1590 319 1630 327 1661 365 1662 400L1650 1213C1648 1280 1570 1322 1510 1296L780 903C719 862 722 790 780 751z" fill="none" stroke="#0c0d12" stroke-width="3"/>
      <path d="M1561 407h14M1568 400v14M818 825h14M825 818v14M1550 1217h14M1557 1210v14" stroke="#9a9ca2" stroke-width="2"/>
      <g fill="#85878a"><circle cx="1520" cy="323" r="5"/><circle cx="1673" cy="404" r="5"/><circle cx="1658" cy="1213" r="5"/><circle cx="1503" cy="1303" r="5"/><circle cx="773" cy="912" r="5"/><circle cx="775" cy="741" r="5"/></g>
      <g class="axis">
        <path d="M525 1240l20-32" stroke="#0d3d12" stroke-width="9"/><path d="M525 1240l20-32" stroke="#237a2a" stroke-width="6"/><path d="M556 1190l-2 20-14-9z" fill="#14571a"/>
        <path d="M528 1241l32 20" stroke="#8e1414" stroke-width="9"/><path d="M528 1241l32 20" stroke="#e62a2a" stroke-width="6"/><path d="M574 1267l-18 0 8-15z" fill="#c41d1d"/>
        <path d="M510 1228c0-12 18-14 19-3l-3 20z" fill="#0e0e94"/>
        <text x="557" y="1188" text-anchor="middle" fill="#2c6b33">Y</text><text x="581" y="1280" text-anchor="middle" fill="#b32025">X</text><text x="515" y="1222" text-anchor="middle" fill="#2c2cb0">Z</text>
      </g>
    </svg>
    <nav class="hud">
      <button aria-label="Zoom para ajustar"><svg class="i"><use href="#zfit"/></svg></button>
      <button aria-label="Zoom de área"><svg class="i"><use href="#zarea"/></svg></button>
      <button aria-label="Vista previa"><svg class="i"><use href="#prev"/></svg></button>
      <button aria-label="Sección"><svg class="i"><use href="#section"/></svg></button>
      <button aria-label="Vistas de anotación"><svg class="i"><use href="#aview"/></svg></button>
      <button aria-label="Orientación"><svg class="i"><use href="#orient"/></svg></button><button class="dd off" aria-label="Más"><i class="tri"></i></button>
      <button aria-label="Estilo"><svg class="i"><use href="#style"/></svg></button><button class="dd off" aria-label="Más"><i class="tri"></i></button>
      <button aria-label="Ocultar o mostrar"><svg class="i"><use href="#glasses"/></svg></button><button class="dd off" aria-label="Más"><i class="tri"></i></button>
      <button aria-label="Apariencia"><svg class="i"><use href="#ball"/></svg></button>
      <button aria-label="Escena"><svg class="i"><use href="#scene"/></svg></button><button class="dd off" aria-label="Más"><i class="tri"></i></button>
      <button aria-label="Configuración"><svg class="i"><use href="#monitor"/></svg></button><button class="dd off" aria-label="Más"><i class="tri"></i></button>
    </nav>
    <div class="docctl">
      <button aria-label="Acoplar a la izquierda"><svg class="c"><use href="#dock"/></svg></button>
      <button class="flip" aria-label="Acoplar a la derecha"><svg class="c"><use href="#dock"/></svg></button>
      <button aria-label="Minimizar documento"><svg class="c"><use href="#min"/></svg></button>
      <button aria-label="Restaurar documento"><svg class="i"><use href="#restore"/></svg></button>
      <button aria-label="Cerrar documento"><svg class="c"><use href="#x"/></svg></button>
    </div>
    <nav class="taskpane">
      <button aria-label="Recursos"><svg class="i"><use href="#home"/></svg></button>
      <button class="active" aria-label="Biblioteca"><svg class="i"><use href="#library"/></svg></button>
      <button aria-label="Explorador"><svg class="i"><use href="#explorer"/></svg></button>
      <button aria-label="Paleta de vistas"><svg class="i"><use href="#palette"/></svg></button>
      <button aria-label="Apariencias"><svg class="i"><use href="#ball"/></svg></button>
      <button aria-label="Propiedades personalizadas"><svg class="i"><use href="#props"/></svg></button>
      <button aria-label="Foro"><svg class="i"><use href="#chat"/></svg></button>
    </nav>
    <button class="collapse" aria-label="Contraer panel"><i class="tri left"></i><i class="tri left"></i><i class="tri left"></i></button>
  </section>
</div>
<nav class="sheets">
  <div class="pager"><button aria-label="Primera"><i class="bar"></i><i class="tri left"></i></button><button aria-label="Anterior"><i class="tri left"></i></button><button aria-label="Siguiente"><i class="tri right"></i></button><button aria-label="Última"><i class="tri right"></i><i class="bar"></i></button></div>
  <button class="sheet active">Modelo</button><button class="sheet">Vistas 3D</button><button class="sheet wide">Estudio de movimiento 1</button>
</nav>
</div>

<footer class="status">
  <span class="doc">tanque aspiradora</span>
  <button class="units">MMGS<i class="tri up"></i></button>
  <button aria-label="Ayuda rápida"><svg class="c"><use href="#help"/></svg></button>
  <button class="tagbtn" aria-label="Etiquetas"><svg class="i"><use href="#tag"/></svg></button>
  <div class="resize"></div>
</footer>
</div>
<div class="edge"></div>
</div>
</body>
</html>
```
FILE: styles.css
```
* { box-sizing: border-box; }
html, body { height: 100%; }
body { margin: 0; font-family: "Noto Sans", "Open Sans", sans-serif; font-size: 22px; line-height: 26px; color: #1b1c1e; background: #050505; }
button, input { font: inherit; color: inherit; }
button { border: 0; padding: 0; margin: 0; background: none; display: flex; align-items: center; justify-content: center; white-space: nowrap; }
input { border: 0; padding: 0; background: none; outline: 0; min-width: 0; }
svg { display: block; flex: none; }
.sprite { position: absolute; width: 0; height: 0; }
.icons { display: none; }
.i { width: 32px; height: 32px; }
.c { width: 28px; height: 28px; }
.s { width: 22px; height: 22px; }
.letter { font-family: "Liberation Serif", serif; font-weight: bold; font-size: 13px; }
.letter.small { font-size: 11px; }
.letter.tiny { font-size: 8px; }

.tri { display: block; flex: none; border: 5px solid transparent; border-top: 7px solid #222; border-bottom: 0; }
.tri.right { border: 7px solid transparent; border-left: 8px solid #333; border-right: 0; }
.tri.left { border: 7px solid transparent; border-right: 8px solid #333; border-left: 0; }
.tri.up { border: 6px solid transparent; border-bottom: 7px solid #222; border-top: 0; }
.off { color: #7e8185; }
.off .tri, button:disabled .tri { border-top-color: #85888c; }
button:disabled { color: #7e8185; }

.desktop { display: flex; height: 100vh; min-height: 900px; }
.app { flex: 1; min-width: 0; display: flex; flex-direction: column; border-top: 4px solid #4a4b4d; border-right: 2px solid #2b2b2d; border-bottom: 2px solid #333; margin-bottom: 6px; box-shadow: 0 3px 0 #808184; background: #d7dade; }
.edge { width: 16px; border-left: 2px solid #8e8f91; border-right: 3px double #777; background: linear-gradient(#555 0, #747578 150px, #b4b4b5 357px, #060606 358px, #060606); }

/* Title bar */
.titlebar { display: flex; align-items: center; height: 58px; flex: none; border-bottom: 2px solid #242426; background: linear-gradient(#dcdfe2, #d5d8dc); }
.brand { display: flex; align-items: center; gap: 9px; width: 260px; height: 54px; align-self: flex-end; padding-left: 8px; border-left: 8px solid #dc2f1e; background: linear-gradient(#2f3a42, #1f262c 60%, #101418); color: #fff; }
.ds { width: 44px; height: 44px; }
.name { font-family: "Open Sans", "Noto Sans", sans-serif; font-size: 27px; font-style: italic; }
.flyout { width: 20px; height: 54px; align-self: flex-end; background: #8b8d91; }
.quick { display: flex; align-items: center; padding-left: 63px; }
.quick button { width: 32px; height: 44px; }
.quick .dd { width: 40px; }
.select-tool { display: flex; height: 45px; width: 72px; margin-left: -5px; border: 2px solid #6c6e72; }
.select-tool button { flex: 1; background: #e3e5e8; }
.select-tool .pressed { flex: none; width: 43px; background: #b3b5b9; border-right: 2px solid #8b8d90; }
.quick.tail { padding-left: 6px; gap: 14px; }
.quick.tail .dd { margin-left: -14px; }
h1 { flex: 1; margin: 0; padding-right: 6px; font-size: 22px; font-weight: 400; text-align: center; }
.search { display: flex; align-items: center; width: 506px; height: 46px; border: 2px solid #222; background: linear-gradient(#e6e9ed, #f3f4f6); padding-left: 10px; }
.search input { flex: 1; margin-left: 10px; }
.search input::placeholder { color: #74777b; opacity: 1; }
.search .dd { width: 30px; }
.winctl { display: flex; align-items: center; padding: 0 4px 0 12px; }
.winctl button { width: 38px; margin-right: 9px; }
.winctl .dd { width: 16px; margin-right: 8px; }
.winctl button:last-child { margin-right: 0; }

/* Ribbon */
.ribbon { display: flex; height: 154px; flex: none; padding: 8px 0 14px; border-bottom: 2px solid #242426; background: #d8dbdf; }
.group { display: flex; border-right: 2px solid #66686b; }
.group.first { padding: 0 5px; }
.group.pad { padding-right: 6px; }
.group.last { border: 0; }
.cmd { flex-direction: column; justify-content: flex-start; padding: 6px 0 7px; }
.cmd.low { padding-top: 20px; }
.cmd span { text-align: center; }
.cmd .tri { margin-top: auto; }
.w92 { width: 92px; } .w106 { width: 106px; } .w110 { width: 110px; } .w114 { width: 114px; } .w116 { width: 116px; }
.w122 { width: 122px; } .w130 { width: 130px; } .w174 { width: 174px; } .w216 { width: 216px; }
.shapes { display: grid; grid-template-columns: 32px 40px 32px 40px 32px 40px 32px; grid-auto-rows: 46px; align-content: center; padding: 0 10px 2px 9px; }
.shapes .dd { padding-top: 6px; }
.rows { display: grid; grid-auto-rows: 46px; align-content: center; width: 358px; }
.rows button { justify-content: flex-start; gap: 15px; padding-right: 12px; }
.rows .tri { margin-left: auto; }

/* Workspace */
.workspace { flex: 1; min-height: 0; display: flex; flex-direction: column; background:
  linear-gradient(#ffffff00 54%, #fbfbfdee 65%, #ffffff 75%, #f4f5f8 100%),
  radial-gradient(ellipse 42% 72% at 84% 44%, #d8dce6 0, #dde0ea 35%, #ffffff00 100%),
  linear-gradient(#fdfdfe 0, #fbfbfd 30%, #e6eaf4 52%, #eceff6 60%); }
.tabs { display: flex; align-items: flex-start; height: 38px; flex: none; position: relative; z-index: 2; }
.tabs button { flex: none; height: 38px; padding-bottom: 4px; border-right: 2px solid #242426; border-bottom: 2px solid #242426; background: linear-gradient(#a5a6a9, #b3b4b7); box-shadow: inset 1px 1px 0 #c8c9cb; }
.tabs .active { height: 44px; margin-top: -2px; padding-bottom: 6px; font-weight: 600; background: #dfe2e6; box-shadow: none; }
.tabs :nth-child(1) { width: 163px; }
.tabs :nth-child(2) { width: 112px; }
.tabs :nth-child(3) { width: 148px; }
.tabs :nth-child(4) { width: 196px; }
.tabs :nth-child(5) { width: 290px; }
.tabs :nth-child(6) { width: 118px; }
.tabs :nth-child(7) { width: 132px; }
.tabs :nth-child(8) { width: 378px; }
.tabs :nth-child(9) { width: 146px; }
.tabs :nth-child(10) { width: 234px; }
.tabs :nth-child(11) { width: 165px; }
.main { flex: 1; min-height: 0; display: flex; }
.notes { width: 54px; flex: none; background: #d7dade; padding-top: 16px; }
.grip { height: 5px; margin: 0 2px 0 6px; background: repeating-linear-gradient(115deg, #222 0, #222 4px, transparent 4px, transparent 9px); }
.note-tools { display: flex; flex-direction: column; gap: 14px; padding: 19px 0 20px 10px; border-bottom: 2px solid #8e9094; }
.note-tools button { width: 32px; height: 32px; }
.panel { width: 384px; flex: none; display: flex; flex-direction: column; background: #e2e5ea; border-bottom: 4px double #7c7f9c; border-right: 2px solid #e2e5ea; }
.ptabs { display: flex; height: 62px; padding-top: 18px; flex: none; background: linear-gradient(#d9dce3 8px, #7e83a4 8px, #7e83a4 10px, #dadde1 10px); box-shadow: inset 0 -2px 0 #222; }
.ptabs button { width: 56px; height: 44px; border: solid #151515; border-width: 2px 3px 2px 0; background: #abacaf; box-shadow: inset 2px 2px 0 #c4c5c7; }
.ptabs .active { background: #e8eaed; border-left: 2px solid #222; border-bottom: 0; box-shadow: none; }
.ptabs .more { margin-left: auto; border: 0; background: none; box-shadow: none; width: 36px; height: 40px; }
.filter { display: flex; align-items: center; height: 35px; margin: 3px 0 0 3px; flex: none; padding-left: 13px; border: 2px solid #333; background: #eee; }
.filter input { flex: 1; }
.tree { flex: 1; min-height: 0; overflow: hidden; padding-top: 7px; }
.root { display: flex; align-items: center; gap: 10px; height: 35px; padding-left: 4px; white-space: pre; }
.tree ul { list-style: none; margin: 0; padding: 0; }
.tree li { position: relative; display: flex; align-items: center; gap: 10px; height: 36px; padding-left: 42px; }
.tree li::before { content: ""; position: absolute; left: 21px; top: 17px; width: 20px; border-top: 2px dotted #777; }
.tree li::after { content: ""; position: absolute; left: 20px; top: 0; height: 36px; border-left: 2px dotted #777; }
.tree li:last-child::after { height: 18px; }
.exp { position: absolute; z-index: 1; left: 12px; top: 9px; width: 18px; height: 18px; border: 2px solid #8b8e95; border-radius: 2px; background: linear-gradient(#2b2b66, #2b2b66) center / 10px 2px no-repeat, linear-gradient(#2b2b66, #2b2b66) center / 2px 10px no-repeat, #f6f6f6; }
.rollback { height: 5px; background: linear-gradient(#3c7bd0, #26508f); }
.hscroll { display: flex; height: 34px; flex: none; background: #ececec; border-top: 1px solid #f6f6f6; }
.hscroll > button { width: 26px; }
.track { flex: 1; padding: 1px 0 3px 8px; }
.thumb { display: flex; align-items: center; justify-content: center; gap: 4px; width: 128px; height: 29px; border: 2px solid #8c8e92; border-radius: 3px; background: linear-gradient(#f6f6f6 50%, #d3d4d9 50%); }
.thumb i { width: 2px; height: 13px; background: #444; }

/* Graphics area */
.view { position: relative; flex: 1; min-width: 0; border-left: 3px solid #2b2b2d; border-bottom: 2px solid #333; }
.model { position: absolute; inset: 0; width: 100%; height: 100%; }
.axis text { font-family: "Liberation Sans", sans-serif; font-size: 23px; }
.hud { position: absolute; top: 16px; left: 50%; transform: translateX(-50%); display: flex; align-items: center; gap: 14px; margin-left: -4px; }
.hud .dd { width: 15px; margin-right: -1px; }
.docctl { position: absolute; top: -27px; right: 18px; display: flex; align-items: center; gap: 14px; z-index: 3; }
.docctl button { width: 32px; height: 32px; }
.flip { transform: scaleX(-1); }
.taskpane { position: absolute; top: 79px; right: 0; width: 49px; border: solid #222; border-width: 1px 0 1px 2px; }
.taskpane button { width: 47px; height: 48px; border: solid #222; border-width: 1px 0; background: #acadb1; box-shadow: inset 2px 2px 0 #c9cacc; }
.taskpane .active { background: #e9ebee; }
.collapse { position: absolute; left: -3px; top: 492px; width: 18px; height: 78px; flex-direction: column; gap: 6px; border: 2px solid #222; border-left: 0; background: #e2e5ea; }
.collapse .tri { border-width: 6px 7px 6px 0; }

/* Bottom tabs and status */
.sheets { display: flex; height: 28px; flex: none; padding-left: 58px; background: #e4e6eb; }
.pager { display: flex; width: 133px; height: 28px; flex: none; border-right: 5px solid #e4e6eb; }
.pager button { flex: 1; background: #abacaf; border-left: 2px solid #c9cacc; box-shadow: inset 0 2px 0 #555; }
.pager .tri.left { border-right-color: #84868a; }
.pager .tri.right { border-left-color: #84868a; }
.bar { width: 2px; height: 14px; background: #84868a; }
.sheet { height: 26px; width: 132px; border-right: 2px solid #242426; border-bottom: 2px solid #333; background: linear-gradient(#a4a5a8, #b4b5b8); }
.sheet.wide { width: 316px; padding-right: 12px; }
.sheet.active { width: 127px; height: 28px; border-left: 2px solid #222; border-bottom-width: 3px; font-weight: 700; background: #dfe2e6; }
.status { display: flex; align-items: center; height: 38px; flex: none; border-top: 2px solid #333; background: linear-gradient(#dfe1e4, #d5d8dc); }
.doc { flex: 1; padding: 2px 0 0 2px; }
.units { width: 164px; margin-right: 32px; justify-content: space-between; }
.tagbtn { margin-left: 115px; }
.resize { width: 20px; height: 20px; margin: 8px 8px 0 22px; background: radial-gradient(circle, #f8f8f8 2px, #a8aaae 2px, transparent 3px) 0 0 / 7px 7px; clip-path: polygon(100% 0, 100% 100%, 0 100%); }
```
